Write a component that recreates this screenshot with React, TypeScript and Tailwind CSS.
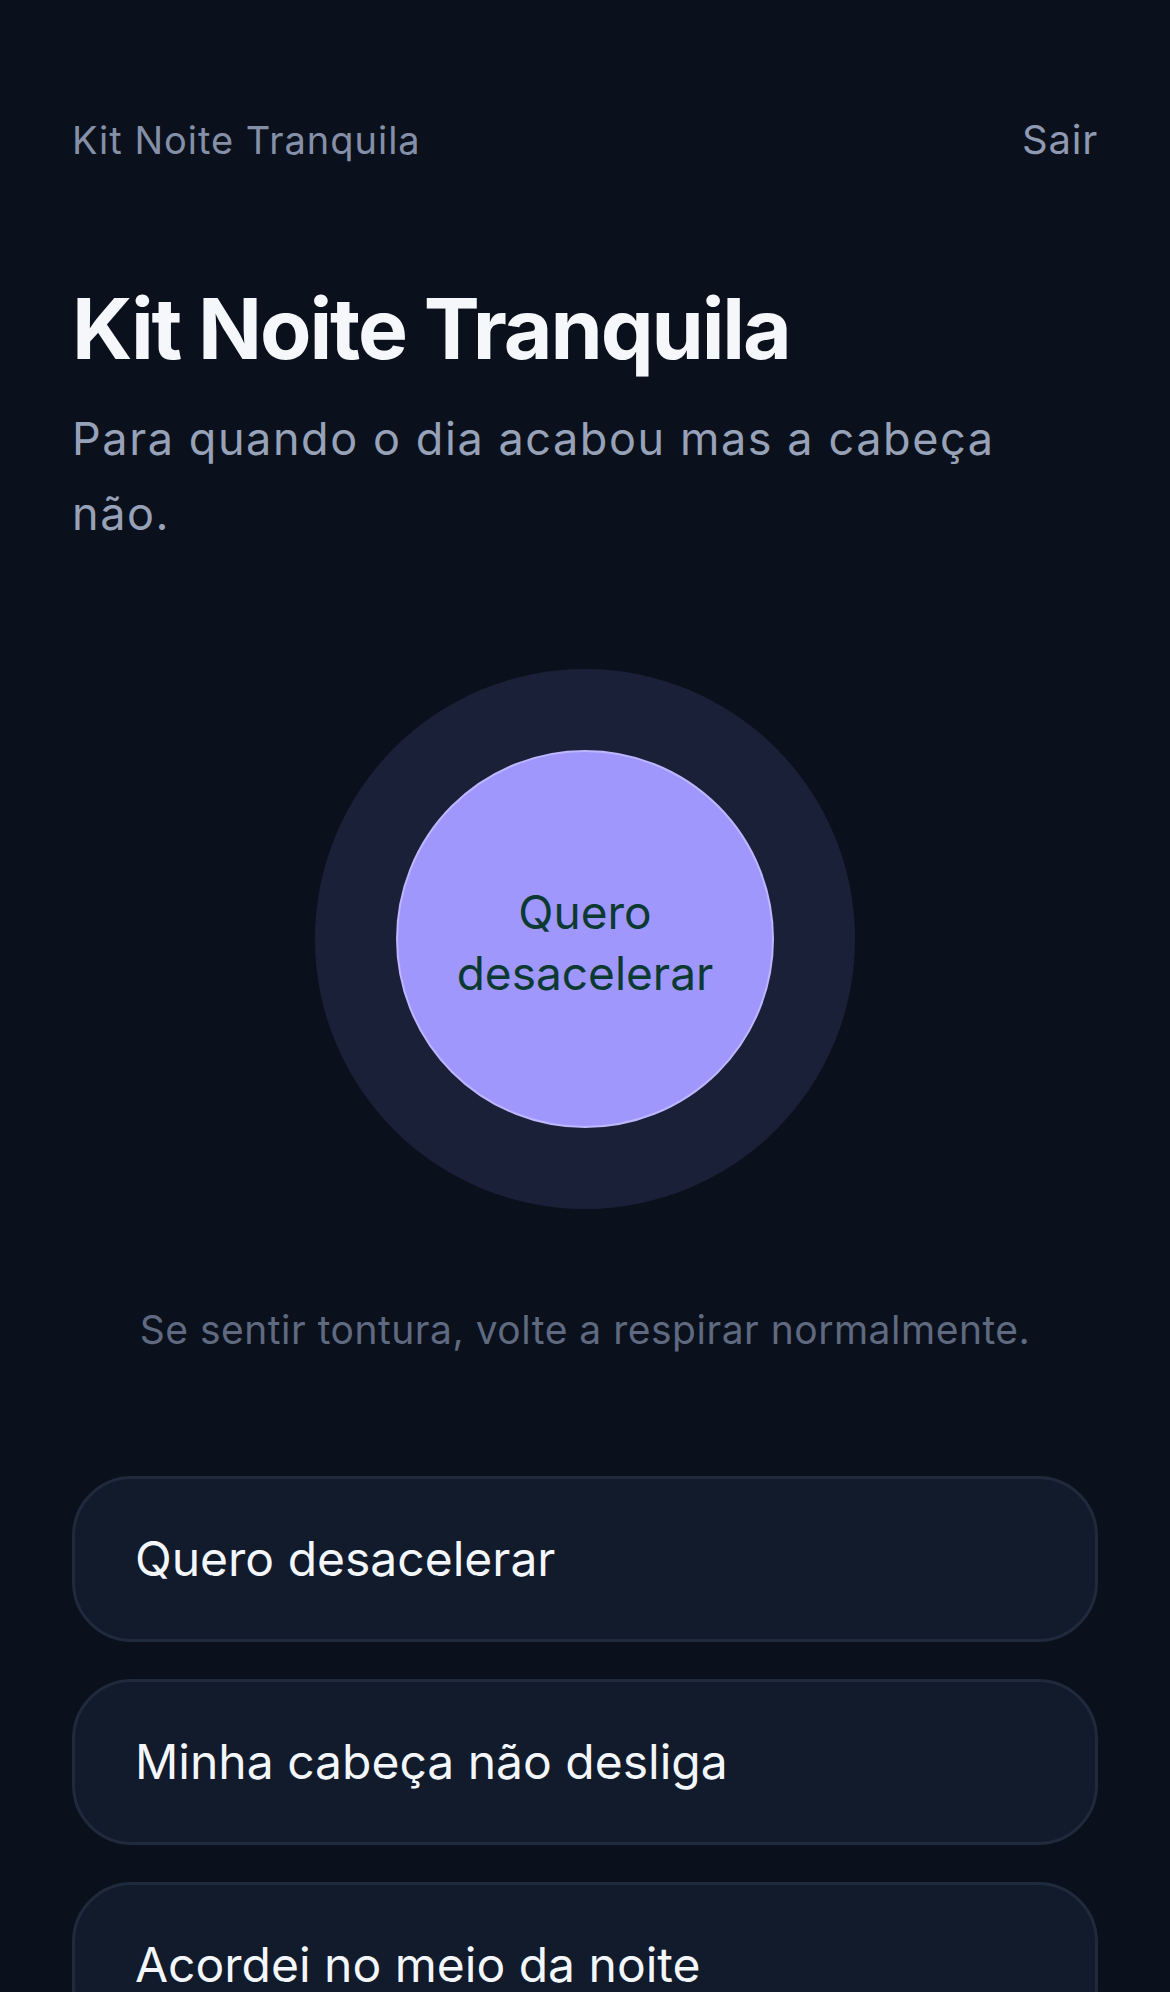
import React from "react";

const options = ["Quero desacelerar", "Minha cabeça não desliga", "Acordei no meio da noite"];

export default function App() {
  return (
    <div className="min-h-screen w-full bg-[#0a111c] font-['Inter',sans-serif] px-[72px] pt-[110px] overflow-hidden">
      <header className="flex items-center justify-between h-[60px]">
        <span className="text-[38px] leading-[60px] tracking-[0.026em] text-[#8590a8]">Kit Noite Tranquila</span>
        <button className="text-[40px] leading-[60px] tracking-[0.02em] text-[#8f9ab2]">Sair</button>
      </header>

      <h1 className="mt-[111px] text-[84px] leading-[96px] font-bold tracking-tight text-[#f5f7fb]">
        Kit Noite Tranquila
      </h1>
      <p className="mt-[24px] max-w-[1000px] text-[45px] leading-[75px] tracking-[0.035em] text-[#97a2b8]">
        Para quando o dia acabou mas a cabeça não.
      </p>

      <div className="mt-[118px] flex justify-center">
        <div className="w-[540px] h-[540px] rounded-full bg-[#1b2039] flex items-center justify-center">
          <div className="w-[378px] h-[378px] rounded-full bg-[#9f97fc] border-[2px] border-[#bcb7ff] flex items-center justify-center text-center">
            <span className="pt-[8px] text-[46px] leading-[61px] text-[#0c3a32]">
              Quero
              <br />
              desacelerar
            </span>
          </div>
        </div>
      </div>

      <p className="mt-[91px] text-center text-[39px] leading-[60px] tracking-[0.013em] text-[#5f6a80]">
        Se sentir tontura, volte a respirar normalmente.
      </p>

      <div className="mt-[116px] flex flex-col gap-[37px] pb-[60px]">
        {options.map((o) => (
          <button
            key={o}
            className="w-full text-left rounded-[60px] border-[3px] border-[#1f2a3c] bg-[#111b2b] px-[60px] py-[44px] text-[48px] leading-[72px] text-[#f3f6fa]"
          >
            {o}
          </button>
        ))}
      </div>
    </div>
  );
}
